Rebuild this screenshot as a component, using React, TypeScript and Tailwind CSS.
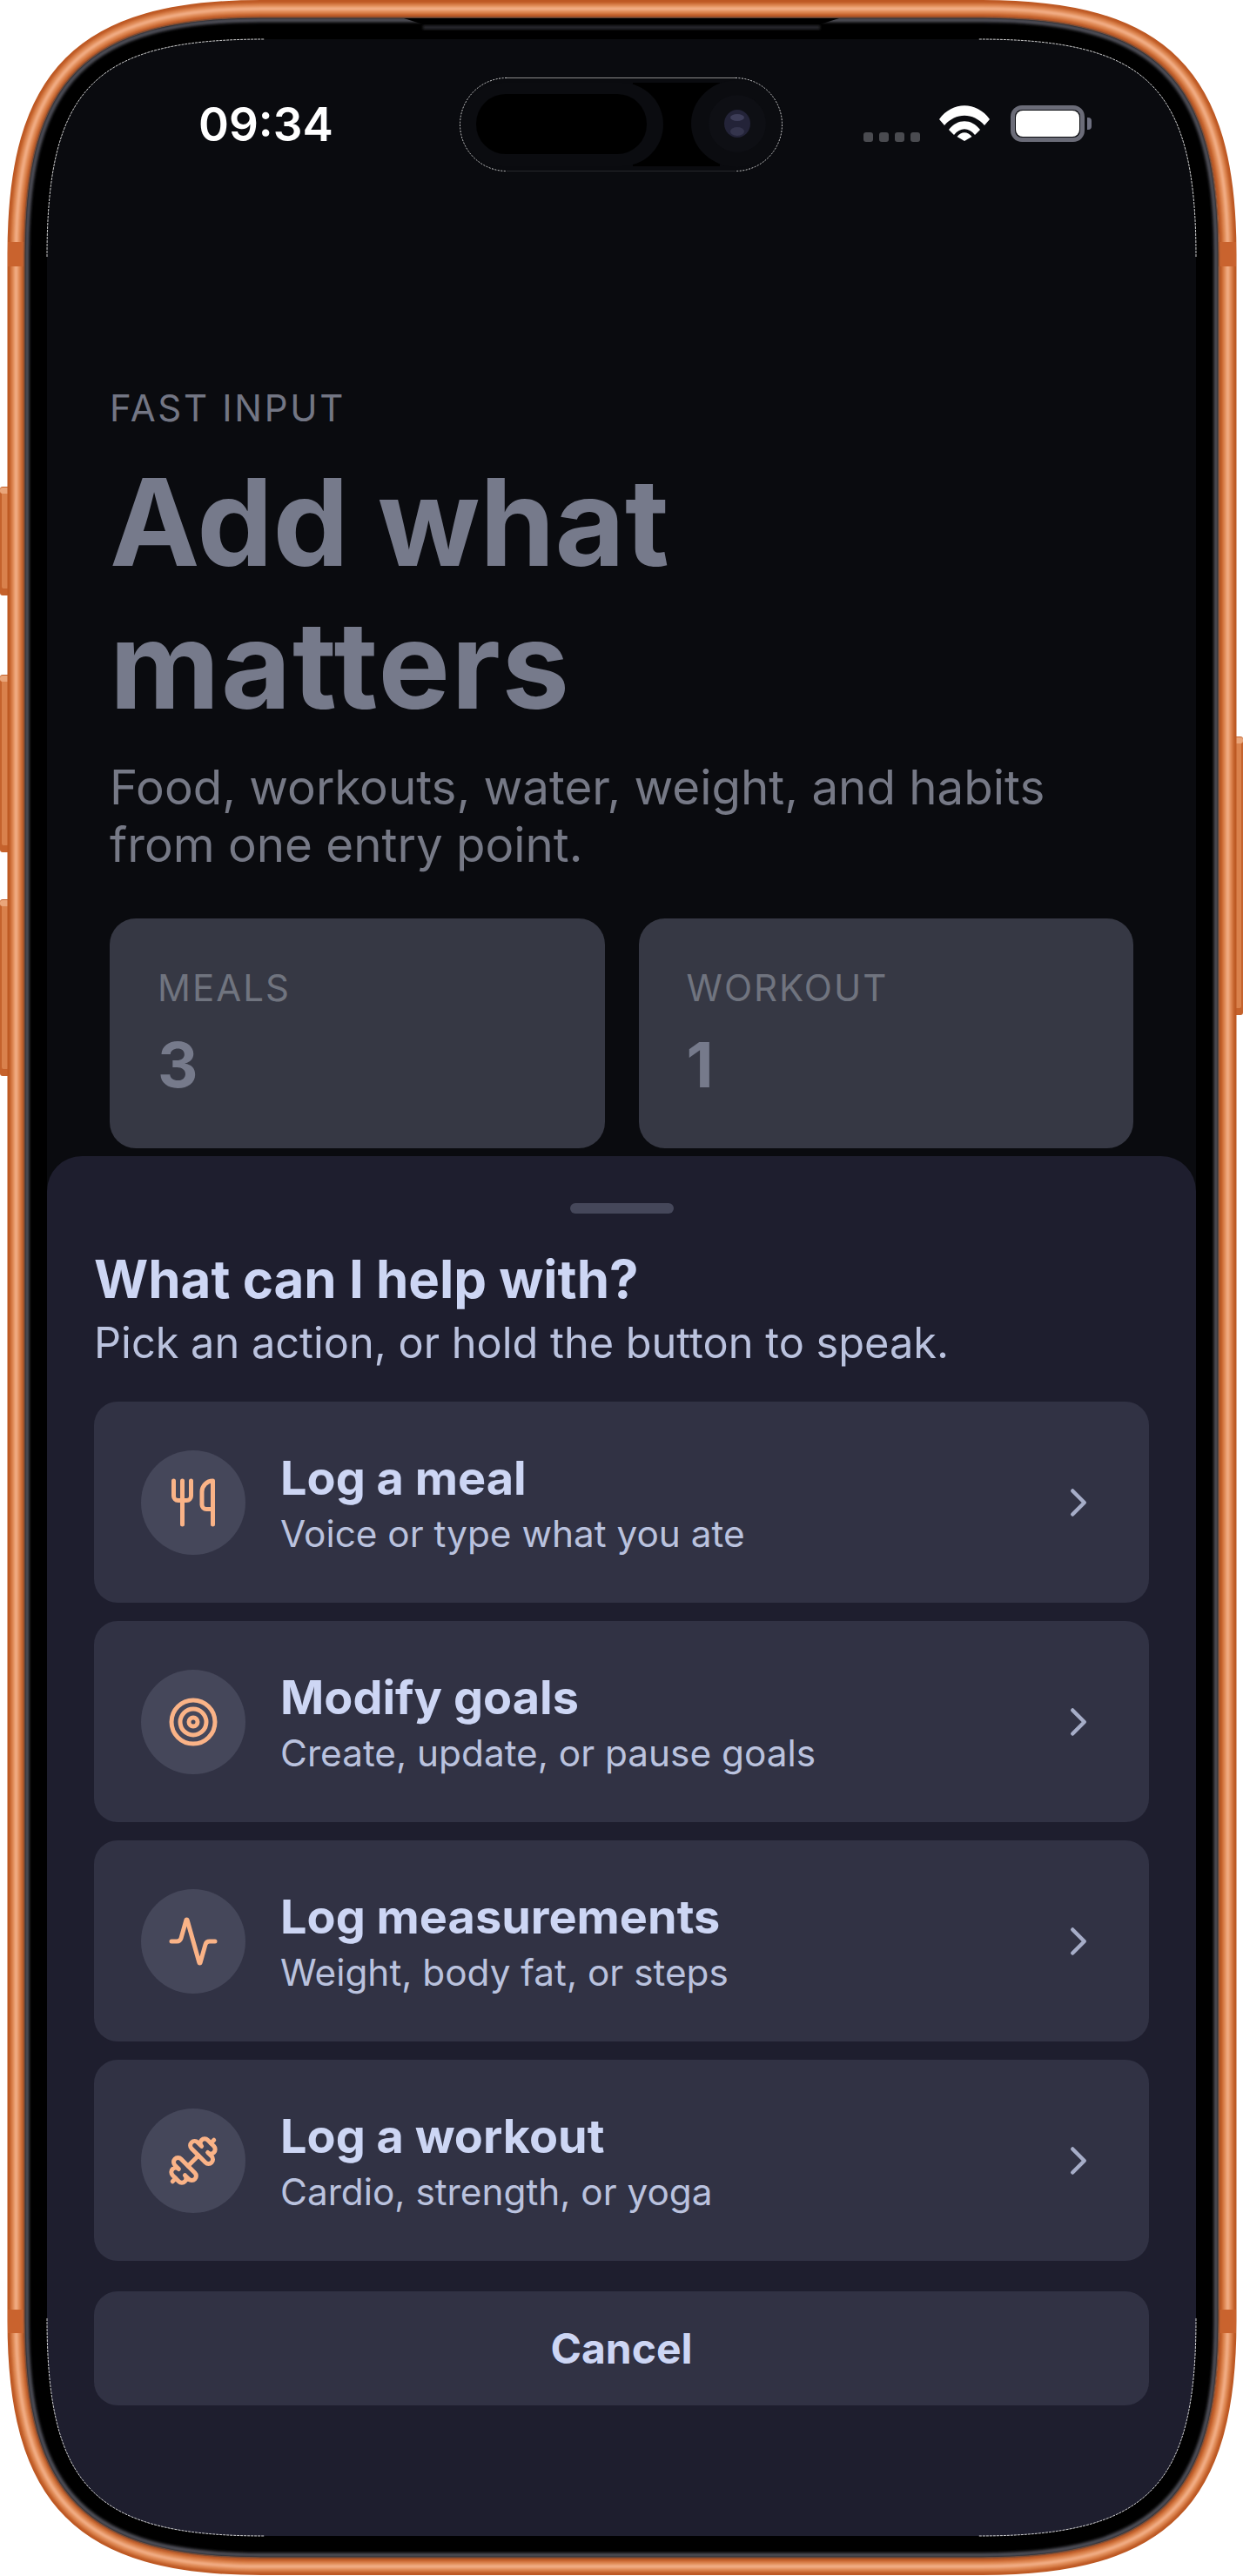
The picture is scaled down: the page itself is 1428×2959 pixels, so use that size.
import { Activity, ChevronRight, Dumbbell, Target, Utensils } from 'lucide-react'

const actions = [
  { title: 'Log a meal', hint: 'Voice or type what you ate', Icon: Utensils },
  { title: 'Modify goals', hint: 'Create, update, or pause goals', Icon: Target },
  { title: 'Log measurements', hint: 'Weight, body fat, or steps', Icon: Activity },
  { title: 'Log a workout', hint: 'Cardio, strength, or yoga', Icon: Dumbbell },
]

// rounded rect with long, soft corners like the phone body
function squircle(x: number, y: number, w: number, h: number, e: number, c: number) {
  const k = e * c
  const r = x + w
  const b = y + h
  return [
    `M${x} ${y + e}`,
    `C${x} ${y + k} ${x + k} ${y} ${x + e} ${y}`,
    `H${r - e}`,
    `C${r - k} ${y} ${r} ${y + k} ${r} ${y + e}`,
    `V${b - e}`,
    `C${r} ${b - k} ${r - k} ${b} ${r - e} ${b}`,
    `H${x + e}`,
    `C${x + k} ${b} ${x} ${b - k} ${x} ${b - e}`,
    'Z',
  ].join(' ')
}

const bandPath = squircle(18.5, 10, 1392, 2938, 282, 0.27)
const bezelPath = squircle(28, 20, 1372, 2918, 272, 0.26)
const bezelEdge = squircle(31, 23, 1366, 2912, 268, 0.26)
const screenClip = squircle(0, 0, 1320, 2868, 250, 0.22)

function SideButton({ x, y, h }: { x: number; y: number; h: number }) {
  return (
    <g>
      <rect x={x} y={y} width="12" height={h} rx="3" fill="#c5622c" />
      <rect x={x + 2} y={y + 6} width="8" height={h - 14} rx="2" fill="#d9814c" />
      <rect x={x} y={y + 1} width="12" height="7" rx="3" fill="#e9a57a" />
    </g>
  )
}

function PhoneBody() {
  return (
    <svg className="absolute inset-0" width="1428" height="2959" viewBox="0 0 1428 2959">
      <defs>
        <filter id="soft" x="-2%" y="-2%" width="104%" height="104%">
          <feGaussianBlur stdDeviation="1.6" />
        </filter>
      </defs>
      <SideButton x={0} y={559} h={125} />
      <SideButton x={0} y={775} h={204} />
      <SideButton x={0} y={1033} h={203} />
      <SideButton x={1416} y={846} h={320} />

      <path d={bandPath} fill="none" stroke="#bd5823" strokeWidth="20" />
      <path d={bandPath} fill="none" stroke="#dd8550" strokeWidth="12" filter="url(#soft)" />
      <path d={bandPath} fill="none" stroke="#f4b28c" strokeWidth="4" filter="url(#soft)" />
      <rect x="9" y="278" width="19" height="28" fill="#c9632e" />
      <rect x="1400" y="278" width="20" height="28" fill="#c9632e" />
      <rect x="9" y="2653" width="19" height="27" fill="#c9632e" />
      <rect x="1400" y="2653" width="20" height="27" fill="#c9632e" />

      <path d={bezelPath} fill="#000" stroke="#9c4a1d" strokeWidth="1.5" />
      <path d={bezelEdge} fill="none" stroke="#4f5059" strokeWidth="5" filter="url(#soft)" />
      <path d="M464 21 L486 28 H942 L964 21 Z" fill="#000" />
      <rect x="486" y="29" width="456" height="5" fill="#26272b" filter="url(#soft)" />
    </svg>
  )
}

function ScreenHairlines() {
  return (
    <svg className="pointer-events-none absolute inset-0" width="1428" height="2959" viewBox="0 0 1428 2959">
      <g fill="none" stroke="#fff" strokeWidth="0.8" strokeDasharray="3 1">
        <path d="M54 295 C54 100 109 45 304 45" />
        <path d="M1374 295 C1374 100 1319 45 1124 45" />
        <path d="M54 2663 C54 2858 109 2913 304 2913" />
        <path d="M1374 2663 C1374 2858 1319 2913 1124 2913" />
      </g>
    </svg>
  )
}

function StatCard({ label, value }: { label: string; value: string }) {
  return (
    <div className="h-[264px] flex-1 rounded-[30px] bg-[#363844] pl-[55px] pt-[56px]">
      <p className="text-[42px] leading-[48px] tracking-[2px] text-[#70747f]">{label}</p>
      <p className="mt-[22px] text-[72px] leading-[84px] font-bold text-[#767a8b]">{value}</p>
    </div>
  )
}

function ActionRow({ title, hint, Icon }: (typeof actions)[number]) {
  return (
    <div className="flex h-[231px] items-center rounded-[27px] bg-[#313244] px-[54px]">
      <div className="flex h-[120px] w-[120px] shrink-0 items-center justify-center rounded-full bg-[#45475a]">
        <Icon size={60} strokeWidth={2} className="text-[#fab387]" />
      </div>
      <div className="ml-[40px] flex-1 pt-[4px]">
        <p className="text-[54px] leading-[66px] font-bold text-[#cdd6f4]">{title}</p>
        <p className="mt-[2px] text-[42.3px] leading-[58px] text-[#bac2de]">{hint}</p>
      </div>
      <ChevronRight size={54} strokeWidth={2} className="text-[#a6adc8]" />
    </div>
  )
}

function StatusBar() {
  return (
    <div className="flex h-[190px] items-start pl-[174px] pr-[120px] pt-[66px]">
      <span className="text-[53px] leading-[64px] font-semibold text-white">09:34</span>
      <div className="ml-auto mt-[10px] flex items-end gap-[24px]">
        <div className="mr-[-2px] flex gap-[7px]">
          <span className="h-[11px] w-[11px] rounded-[3px] bg-[#4a4b50]" />
          <span className="h-[11px] w-[11px] rounded-[3px] bg-[#4a4b50]" />
          <span className="h-[11px] w-[11px] rounded-[3px] bg-[#4a4b50]" />
          <span className="h-[11px] w-[11px] rounded-[3px] bg-[#4a4b50]" />
        </div>
        <svg width="58" height="42" viewBox="0 0 58 42" fill="white">
          <path d="M0 16 C15 -5 43 -5 58 16 L52 23 C39 8 19 8 6 23 Z" />
          <path d="M11 28 C21 15 37 15 47 28 L41 34 C34 25 24 25 17 34 Z" />
          <path d="M20.5 37 C25 30.5 33 30.5 37.5 37 L29 42 Z" transform="translate(0 -1)" />
        </svg>
        <div className="flex items-center">
          <div className="h-[42px] w-[85px] rounded-[13px] border-[5px] border-[#6b6c78] p-[1px]">
            <div className="h-full w-full rounded-[8px] bg-white" />
          </div>
          <span className="ml-[3px] h-[14px] w-[5px] rounded-r-[4px] bg-[#6e7080]" />
        </div>
      </div>
    </div>
  )
}

function DynamicIsland() {
  return (
    <svg className="absolute left-[473px] top-[44px]" width="373" height="108" viewBox="0 0 373 108">
      <rect x="0" y="0" width="373" height="108" rx="54" fill="#0a0b0f" />
      <rect x="200" y="6" width="100" height="96" fill="#000" />
      <rect x="3" y="6" width="232" height="96" rx="48" fill="#0b0c10" />
      <rect x="20" y="19" width="196" height="69" rx="34" fill="#000" />
      <ellipse cx="320" cy="53" rx="53" ry="50" fill="#0b0c10" />
      <circle cx="320" cy="53" r="33" fill="#0e0f14" />
      <ellipse cx="320" cy="53" rx="15" ry="16" fill="#232338" />
      <ellipse cx="320" cy="46" rx="8" ry="4" fill="#3d3d58" />
      <ellipse cx="320" cy="62" rx="8" ry="5" fill="#34344c" />
      <path d="M55 0.5 H318" stroke="#8a8a8a" strokeWidth="1" />
      <path d="M55 107.5 H318" stroke="#26272b" strokeWidth="1" />
      <g fill="none" stroke="#fff" strokeWidth="0.8" strokeDasharray="2 1.5">
        <path d="M55 0.5 A53.5 53.5 0 0 0 55 107.5" />
        <path d="M318 0.5 A53.5 53.5 0 0 1 318 107.5" />
      </g>
    </svg>
  )
}

export default function App() {
  return (
    <div className="relative h-[2959px] w-[1428px] overflow-hidden bg-white pl-[54px] pt-[45px] font-['Inter',sans-serif]">
      <PhoneBody />

      <div
        className="relative h-[2868px] w-[1320px] overflow-hidden bg-[#0a0b0f]"
        style={{ clipPath: `path('${screenClip}')` }}
      >
        <StatusBar />
        <DynamicIsland />

        <div className="px-[72px] pt-[210px]">
          <p className="text-[42px] leading-[48px] tracking-[2.7px] text-[#737684]">FAST INPUT</p>
          <h1 className="mt-[25px] text-[138.5px] leading-[164px] font-bold text-[#767a8b]">
            Add what
            <br />
            <span className="tracking-[1.6px]">matters</span>
          </h1>
          <p className="mt-[25px] text-[54.7px] leading-[66px] text-[#767986]">
            Food, workouts, water, weight, and habits
            <br />
            from one entry point.
          </p>
          <div className="mt-[52px] flex gap-[39px]">
            <StatCard label="MEALS" value="3" />
            <StatCard label="WORKOUT" value="1" />
          </div>
        </div>

        {/* bottom sheet */}
        <div className="absolute inset-x-0 bottom-0 h-[1585px] rounded-t-[40px] bg-[#1e1e2e] px-[54px] pt-[54px]">
          <div className="mx-auto h-[12px] w-[119px] rounded-full bg-[#45475a]" />
          <h2 className="mt-[39px] text-[60px] leading-[72px] font-bold text-[#cdd6f4]">What can I help with?</h2>
          <p className="mt-[8px] text-[48.7px] leading-[60px] text-[#bac2de]">Pick an action, or hold the button to speak.</p>
          <div className="mt-[37px] flex flex-col gap-[21px]">
            {actions.map((action) => (
              <ActionRow key={action.title} {...action} />
            ))}
          </div>
          <button className="mt-[35px] h-[131px] w-full rounded-[27px] bg-[#313244] text-[48px] font-bold text-[#cdd6f4]">
            Cancel
          </button>
        </div>
      </div>

      <ScreenHairlines />
    </div>
  )
}
